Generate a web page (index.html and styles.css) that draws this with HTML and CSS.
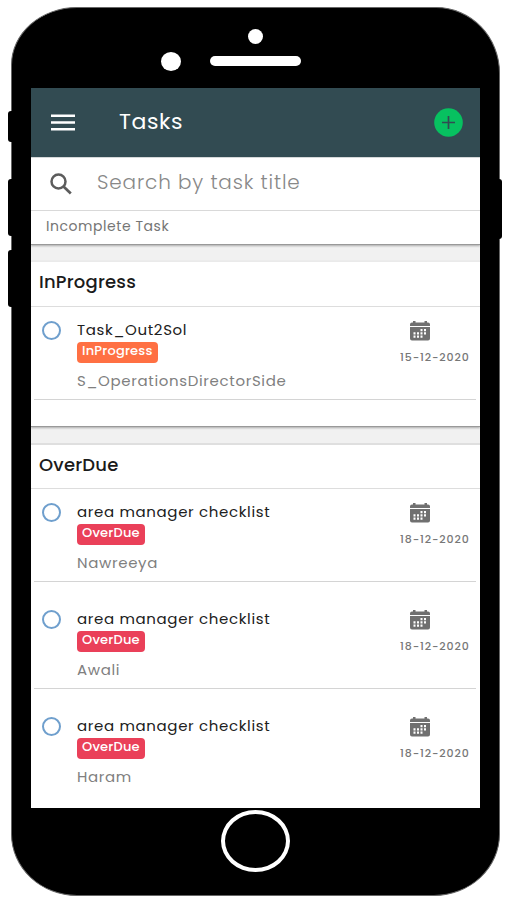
FILE: index.html
```html
<!DOCTYPE html>
<html lang="en">
<head>
  <meta charset="UTF-8" />
  <title>Tasks</title>
  <link rel="stylesheet" href="styles.css">
</head>
<body>

  <!-- Shared icons -->
  <svg class="sprite" width="0" height="0">
    <symbol id="calendar" viewBox="0 0 20 20">
      <path fill="#707070" d="M2 1.500h1V0h2.500v1.500h9V0H17v1.500h1q2 0 2 2V5H0V3.500q0-2 2-2zM0 6h20v11.500q0 2-2 2H2q-2 0-2-2z" />
      <path fill="#fff" d="M10.500 8h2v2.200h-2zM14 8h2v2.200h-2zM3.500 11.300h2v2.200h-2zM7 11.300h2v2.200H7zM10.500 11.300h2v2.200h-2zM14 11.300h2v2.200h-2zM3.500 14.600h2v2.200h-2zM7 14.600h2v2.200H7zM10.500 14.600h2v2.200h-2z" />
    </symbol>
  </svg>

  <div class="phone">
    <div class="key key-mute"></div>
    <div class="key key-up"></div>
    <div class="key key-down"></div>
    <div class="key key-power"></div>
    <div class="camera"></div>
    <div class="sensor"></div>
    <div class="speaker"></div>

    <div class="screen">
      <header class="toolbar">
        <svg class="menu" width="24" height="17" viewBox="0 0 24 17">
          <path fill="#fff" d="M0 0.500h24v2.600H0zM0 7.200h24v2.600H0zM0 13.900h24v2.600H0z" />
        </svg>
        <h1>Tasks</h1>
        <svg class="add" width="30" height="30" viewBox="0 0 30 30">
          <circle cx="15.500" cy="14.500" r="14.300" fill="#07c160" />
          <path d="M15.500 8v13M9 14.500h13" stroke="#324b52" stroke-width="1.700" />
        </svg>
      </header>

      <div class="search">
        <svg width="23" height="22" viewBox="0 0 23 22">
          <circle cx="8.500" cy="8.500" r="7" fill="none" stroke="#5c5c5c" stroke-width="2.500" />
          <path d="M13.500 13.500l7.300 7" stroke="#5c5c5c" stroke-width="2.700" />
        </svg>
        <span>Search by task title</span>
      </div>
      <div class="filter">Incomplete Task</div>

      <section class="card card-progress">
        <h2>InProgress</h2>
        <div class="task">
          <div class="radio"></div>
          <div class="info">
            <div class="name">Task_Out2Sol</div>
            <div class="badge orange">InProgress</div>
            <div class="place">S_OperationsDirectorSide</div>
          </div>
          <div class="date">
            <svg width="20" height="20"><use href="#calendar" /></svg>
            <span>15-12-2020</span>
          </div>
        </div>
      </section>

      <section class="card card-overdue">
        <h2>OverDue</h2>
        <div class="task">
          <div class="radio"></div>
          <div class="info">
            <div class="name">area manager checklist</div>
            <div class="badge red">OverDue</div>
            <div class="place">Nawreeya</div>
          </div>
          <div class="date">
            <svg width="20" height="20"><use href="#calendar" /></svg>
            <span>18-12-2020</span>
          </div>
        </div>
        <div class="task">
          <div class="radio"></div>
          <div class="info">
            <div class="name">area manager checklist</div>
            <div class="badge red">OverDue</div>
            <div class="place">Awali</div>
          </div>
          <div class="date">
            <svg width="20" height="20"><use href="#calendar" /></svg>
            <span>18-12-2020</span>
          </div>
        </div>
        <div class="task">
          <div class="radio"></div>
          <div class="info">
            <div class="name">area manager checklist</div>
            <div class="badge red">OverDue</div>
            <div class="place">Haram</div>
          </div>
          <div class="date">
            <svg width="20" height="20"><use href="#calendar" /></svg>
            <span>18-12-2020</span>
          </div>
        </div>
      </section>
    </div>

    <div class="home"></div>
  </div>

</body>
</html>
```
FILE: styles.css
```css
* {
  box-sizing: border-box;
}
body {
  margin: 0;
  background: #fff;
  font-family: Poppins, Inter, sans-serif;
  overflow: hidden;
}
.sprite {
  position: absolute;
}
.phone {
  position: relative;
  width: 489px;
  height: 889px;
  margin: 7px 0 0 11px;
  padding: 80px 20px 0;
  background: #000;
  border: 1px solid #666;
  border-radius: 66px 64px 66px 66px / 58px 66px 62px 62px;
}

/* hardware */
.key {
  position: absolute;
  left: -4px;
  width: 6px;
  background: #000;
  border-radius: 3px 0 0 3px;
}
.key-mute {
  top: 103px;
  height: 31px;
}
.key-up {
  top: 171px;
  height: 57px;
}
.key-down {
  top: 242px;
  height: 57px;
}
.key-power {
  left: auto;
  right: -3px;
  top: 171px;
  height: 60px;
  border-radius: 0 3px 3px 0;
}
.camera {
  position: absolute;
  left: 149px;
  top: 44px;
  width: 20px;
  height: 19px;
  background: #fff;
  border-radius: 50%;
}
.sensor {
  position: absolute;
  left: 236px;
  top: 21px;
  width: 15px;
  height: 15px;
  background: #fff;
  border-radius: 50%;
}
.speaker {
  position: absolute;
  left: 198px;
  top: 48px;
  width: 91px;
  height: 10px;
  background: #fff;
  border-radius: 5px;
}
.home {
  width: 69px;
  height: 62px;
  margin: 2px auto 0;
  border: 4px solid #fff;
  border-radius: 50%;
}

.screen {
  width: 449px;
  height: 720px;
  margin-left: -1px;
  background: #f1f1f1;
  overflow: hidden;
  white-space: nowrap;
}
.toolbar {
  display: flex;
  align-items: center;
  height: 69px;
  padding: 0 17px 0 20px;
  background: #324b52;
  color: #fff;
}
h1 {
  flex: 1;
  margin: -3px 0 0 44px;
  font-size: 22px;
  font-weight: 400;
  letter-spacing: 0.6px;
}
.search {
  display: flex;
  align-items: center;
  height: 54px;
  padding: 0 19px;
  background: #fff;
  border-top: 1px solid #d5d8d9;
  border-bottom: 1px solid #ddd;
  color: #888;
  font-size: 20px;
  font-weight: 300;
  letter-spacing: 0.85px;
}
.search span {
  margin: -4px 0 0 24px;
}
.filter {
  height: 34px;
  padding-left: 15px;
  background: #fff;
  border-bottom: 1px solid #999;
  box-shadow: 0 1px 2px #aaa;
  color: #757575;
  font-size: 14px;
  line-height: 31px;
  letter-spacing: 0.55px;
}

/* cards */
.card {
  background: #fff;
}
.card-progress {
  height: 166px;
  margin-top: 16px;
  border-top: 1px solid #eaeaea;
  border-bottom: 1px solid #999;
  box-shadow: 0 1px 2px #aaa;
}
.card-overdue {
  height: 385px;
  margin-top: 16px;
  border-top: 2px solid #dfdfdf;
}
h2 {
  height: 45px;
  margin: 0;
  padding-left: 8px;
  border-bottom: 1px solid #ddd;
  color: #1b1b1b;
  font-size: 18px;
  font-weight: 500;
  line-height: 40px;
  letter-spacing: 0.2px;
}
.card-overdue h2 {
  height: 44px;
  line-height: 39px;
}
.task {
  display: flex;
  height: 93px;
  margin: 0 4px 14px 3px;
  border-bottom: 1px solid #d4d4d4;
}
.card-overdue .task:last-child {
  border-bottom: 0;
}
.radio {
  width: 19px;
  height: 19px;
  margin: 14px 0 0 8px;
  border: 2px solid #6f9fcd;
  border-radius: 50%;
}
.info {
  flex: 1;
  margin-left: 16px;
}
.name {
  height: 23px;
  margin-top: 12px;
  color: #202020;
  font-size: 15px;
  line-height: 22px;
  letter-spacing: 0.65px;
}
.badge {
  width: 68px;
  height: 21px;
  padding-left: 5px;
  border-radius: 4px;
  color: #fff;
  font-size: 13px;
  font-weight: 500;
  line-height: 18px;
  letter-spacing: 0.2px;
}
.badge.orange {
  width: 81px;
  background: #ff7043;
}
.badge.red {
  background: #ea4059;
}
.place {
  margin-top: 8px;
  color: #808080;
  font-size: 15px;
  line-height: 20px;
  letter-spacing: 0.65px;
}
.date {
  width: 76px;
  color: #777;
  font-size: 11px;
  font-weight: 500;
  line-height: 14px;
  letter-spacing: 0.9px;
}
.date svg {
  display: block;
  margin: 14px 0 9px 10px;
}
.date span {
  display: block;
}
```
